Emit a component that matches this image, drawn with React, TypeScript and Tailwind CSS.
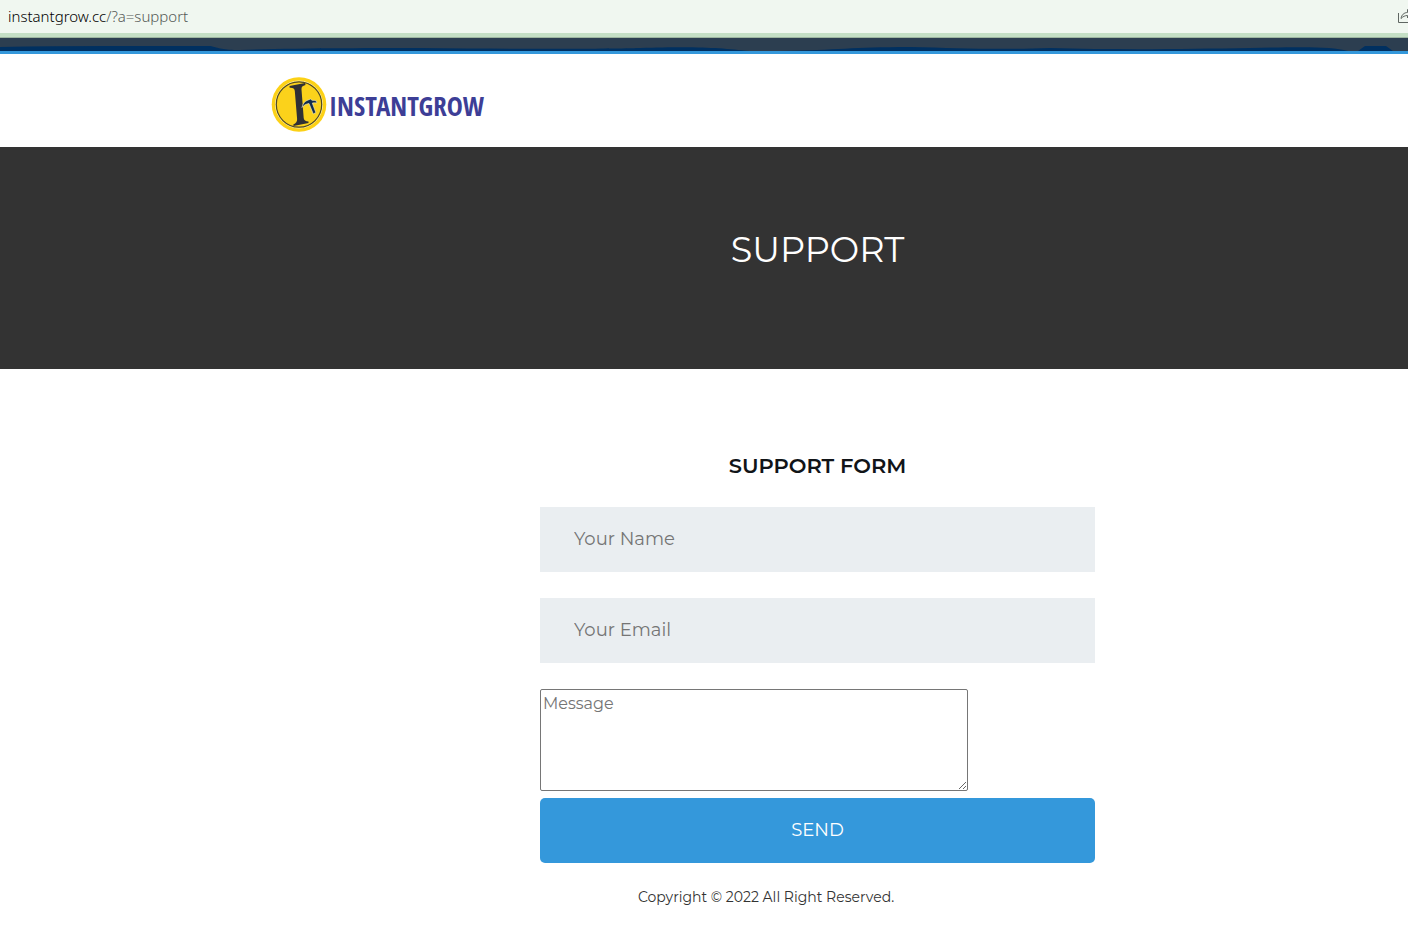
function ShareIcon() {
  return (
    <svg className="h-4 w-[10px]" viewBox="0 0 10 16" fill="none" stroke="#5f6662" aria-hidden="true">
      <path d="M.5 5v9.500H10" />
      <path d="M3 10.500C3.500 7 6 4.500 9.500 4.500V1.500L14 6M3 10.500C5 8.500 7 7.500 9.500 7.500V10" />
    </svg>
  );
}

function CoinLogo() {
  return (
    <svg className="size-[56px] shrink-0" viewBox="0 0 56 56" aria-hidden="true">
      <circle cx="28" cy="28.500" r="27.300" fill="#fcd116" />
      <circle cx="28" cy="28.500" r="23.500" fill="#fbd21b" stroke="#fbeeb0" strokeWidth="1" />
      <circle cx="28" cy="28.500" r="22.700" fill="#fbd21b" stroke="#514a22" strokeWidth="1.200" />
      <path
        d="M18.500 10L34 7L34.500 9C31.500 9.700 30.300 11 30.500 13.500L32.700 42C32.900 44.500 34.500 45.300 37.500 45.500L37.500 47L22.500 50L22.300 48.500C25 47.500 26.300 45.500 26.100 43L23.800 15C23.600 12.500 22 11.500 18.700 11.700Z"
        fill="#2f3035"
      />
      <path
        d="M31 31.500C31.800 28 33.500 25.300 36 24.500L39.500 23L41.300 24.400C42.800 24.300 44 24.400 45.500 25L45.800 27C44 26.800 42.500 26.800 41.300 27.100L44.800 36.500L42.300 38L38 27.500C35 28 32.800 29.200 31 31.500Z"
        fill="#122c4c"
        stroke="#f4efcf"
        strokeWidth=".6"
      />
    </svg>
  );
}

function NavyStrip() {
  return (
    <div className="h-4 border-b-[3px] border-[#3498db] bg-[#2c3e50]">
      <svg className="block h-full w-full" viewBox="0 0 1408 13" preserveAspectRatio="none" fill="#003060" aria-hidden="true">
        <path d="M0 9Q50 8 110 8H210C219 10 223 12 240 12C290 10 380 10 420 10C520 11 610 11 640 10C700 8 720 10 750 13H0Z" />
        <path d="M780 13C840 12 850 9 910 9C960 10 990 12 1050 10C1120 12 1190 11 1250 10C1300 9 1330 8 1348 13Z" />
        <path d="M1358 13L1365 8H1386L1393 13Z" />
      </svg>
    </div>
  );
}

const fieldClass =
  "block h-[65px] w-full bg-[#eaeef1] px-[34px] pb-[2px] text-[18px] text-[#333333] placeholder:text-[#757575]";

export default function App() {
  return (
    <div className="min-h-screen overflow-x-hidden bg-white font-['Montserrat','Inter',sans-serif]">
      <div className="flex h-[38px] items-center justify-between border-b border-[#9db5a0] bg-[#f0f7f0] pl-2 font-['Noto_Sans',sans-serif] text-[15px] font-light text-[#555a57] shadow-[inset_0_-4px_0_#c4dfc5]">
        <p className="pb-[6px] leading-5">
          <span className="text-black">instantgrow.cc</span>/?a=support
        </p>
        <button type="button" aria-label="Share" className="pb-[5px]">
          <ShareIcon />
        </button>
      </div>
      <NavyStrip />

      <header className="flex h-[93px] items-center pt-[7px] pl-[271px]">
        <a href="#home" className="flex items-center gap-[2px]">
          <CoinLogo />
          <span className="pt-1 font-['Open_Sans_Condensed','Roboto_Condensed',sans-serif] text-[27px] leading-8 font-bold text-[#3d3e96]">
            INSTANTGROW
          </span>
        </a>
      </header>

      <section className="flex h-[222px] items-center justify-center bg-[#333333] pb-4 pl-[227px]">
        <h1 className="text-[35px] leading-10 font-normal text-white">SUPPORT</h1>
      </section>

      <main className="pl-[227px]">
        <div className="mx-auto max-w-[555px] pt-[82px]">
          <h2 className="text-center text-[21px] leading-[30px] font-semibold text-[#111418]">SUPPORT FORM</h2>
          <form className="mt-[26px]" onSubmit={(event) => event.preventDefault()}>
            <input aria-label="Your Name" type="text" placeholder="Your Name" className={fieldClass} />
            <input aria-label="Your Email" type="email" placeholder="Your Email" className={`${fieldClass} mt-[26px]`} />
            <textarea
              aria-label="Message"
              placeholder="Message"
              className="mt-[26px] block h-[102px] w-[428px] max-w-full resize rounded-[2px] border border-[#767676] bg-white p-[2px] text-[16px] leading-6 placeholder:text-[#757575]"
            />
            <button type="submit" className="mt-[7px] block h-[65px] w-full rounded-[5px] bg-[#3498db] text-[18px] text-white">
              SEND
            </button>
          </form>
          <footer className="mt-6 pr-[103px] pb-10 text-center text-[14px] leading-5 text-[#333333]">
            Copyright © 2022 All Right Reserved.
          </footer>
        </div>
      </main>
    </div>
  );
}
